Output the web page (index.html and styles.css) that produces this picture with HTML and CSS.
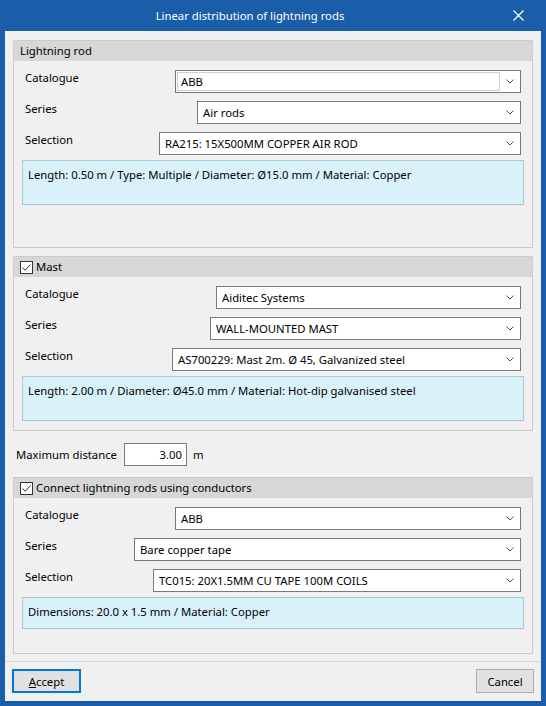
FILE: index.html
```html
<!DOCTYPE html>
<html lang="en">
<head>
<meta charset="utf-8">
<title>Linear distribution of lightning rods</title>
<link rel="stylesheet" href="styles.css">
</head>
<body>
<div class="window">
  <div class="titlebar">
    <div class="title">Linear distribution of lightning rods</div>
    <div class="close">
      <svg width="11" height="11" viewBox="0 0 11 11"><path d="M0.5 0.5 L10.5 10.5 M10.5 0.5 L0.5 10.5" stroke="#fff" stroke-width="1.2" fill="none"/></svg>
    </div>
  </div>
  <div class="client">
    <section class="group g1">
      <div class="group-head">Lightning rod</div>
      <div class="group-body">
        <div class="row">
          <span class="label">Catalogue</span>
          <div class="combo editable w346"><span class="edit">ABB</span><span class="arrow"><svg width="8" height="5" viewBox="0 0 8 5"><path d="M0.5 0.5 L4 4 L7.5 0.5" stroke="#555" stroke-width="1" fill="none"/></svg></span></div>
        </div>
        <div class="row">
          <span class="label">Series</span>
          <div class="combo w324"><span class="value">Air rods</span><span class="arrow"><svg width="8" height="5" viewBox="0 0 8 5"><path d="M0.5 0.5 L4 4 L7.5 0.5" stroke="#555" stroke-width="1" fill="none"/></svg></span></div>
        </div>
        <div class="row">
          <span class="label">Selection</span>
          <div class="combo w362"><span class="value">RA215: 15X500MM COPPER AIR ROD</span><span class="arrow"><svg width="8" height="5" viewBox="0 0 8 5"><path d="M0.5 0.5 L4 4 L7.5 0.5" stroke="#555" stroke-width="1" fill="none"/></svg></span></div>
        </div>
        <div class="info tall">Length: 0.50 m / Type: Multiple / Diameter: Ø15.0 mm / Material: Copper</div>
      </div>
    </section>

    <section class="group g2">
      <div class="group-head"><span class="check"><svg width="11" height="11" viewBox="0 0 11 11"><path d="M1.5 5.5 L4.2 8.2 L9.5 2.5" stroke="#333" stroke-width="1" fill="none"/></svg></span>Mast</div>
      <div class="group-body">
        <div class="row">
          <span class="label">Catalogue</span>
          <div class="combo w305"><span class="value">Aiditec Systems</span><span class="arrow"><svg width="8" height="5" viewBox="0 0 8 5"><path d="M0.5 0.5 L4 4 L7.5 0.5" stroke="#555" stroke-width="1" fill="none"/></svg></span></div>
        </div>
        <div class="row">
          <span class="label">Series</span>
          <div class="combo w311"><span class="value">WALL-MOUNTED MAST</span><span class="arrow"><svg width="8" height="5" viewBox="0 0 8 5"><path d="M0.5 0.5 L4 4 L7.5 0.5" stroke="#555" stroke-width="1" fill="none"/></svg></span></div>
        </div>
        <div class="row">
          <span class="label">Selection</span>
          <div class="combo w349"><span class="value">AS700229: Mast 2m. Ø 45, Galvanized steel</span><span class="arrow"><svg width="8" height="5" viewBox="0 0 8 5"><path d="M0.5 0.5 L4 4 L7.5 0.5" stroke="#555" stroke-width="1" fill="none"/></svg></span></div>
        </div>
        <div class="info tall">Length: 2.00 m / Diameter: Ø45.0 mm / Material: Hot-dip galvanised steel</div>
      </div>
    </section>

    <div class="distance">
      <span class="dist-label">Maximum distance</span>
      <span class="number">3.00</span>
      <span class="unit">m</span>
    </div>

    <section class="group g3">
      <div class="group-head"><span class="check"><svg width="11" height="11" viewBox="0 0 11 11"><path d="M1.5 5.5 L4.2 8.2 L9.5 2.5" stroke="#333" stroke-width="1" fill="none"/></svg></span>Connect lightning rods using conductors</div>
      <div class="group-body">
        <div class="row">
          <span class="label">Catalogue</span>
          <div class="combo w346"><span class="value">ABB</span><span class="arrow"><svg width="8" height="5" viewBox="0 0 8 5"><path d="M0.5 0.5 L4 4 L7.5 0.5" stroke="#555" stroke-width="1" fill="none"/></svg></span></div>
        </div>
        <div class="row">
          <span class="label">Series</span>
          <div class="combo w387"><span class="value">Bare copper tape</span><span class="arrow"><svg width="8" height="5" viewBox="0 0 8 5"><path d="M0.5 0.5 L4 4 L7.5 0.5" stroke="#555" stroke-width="1" fill="none"/></svg></span></div>
        </div>
        <div class="row">
          <span class="label">Selection</span>
          <div class="combo w368"><span class="value">TC015: 20X1.5MM CU TAPE 100M COILS</span><span class="arrow"><svg width="8" height="5" viewBox="0 0 8 5"><path d="M0.5 0.5 L4 4 L7.5 0.5" stroke="#555" stroke-width="1" fill="none"/></svg></span></div>
        </div>
        <div class="info short">Dimensions: 20.0 x 1.5 mm / Material: Copper</div>
      </div>
    </section>

    <div class="separator"></div>

    <div class="footer">
      <button class="btn default"><u>A</u>ccept</button>
      <button class="btn">Cancel</button>
    </div>
  </div>
</div>
</body>
</html>
```
FILE: styles.css
```css
* { box-sizing: border-box; }

html, body {
  margin: 0;
  padding: 0;
}

body {
  font-family: "Segoe UI", "Noto Sans", sans-serif;
  font-size: 11.3px;
  line-height: 16px;
  color: #000;
}

.window {
  width: 546px;
  height: 706px;
  background: #1a5ea9;
  padding: 0 5px 5px 5px;
  display: flex;
  flex-direction: column;
}

.titlebar {
  height: 31px;
  display: flex;
  align-items: center;
  color: #fff;
}

.title {
  flex: 1;
  text-align: center;
}

.close {
  width: 46px;
  height: 31px;
  display: flex;
  align-items: center;
  justify-content: center;
  padding-bottom: 1px;
}

.close svg { display: block; }

.client {
  flex: 1;
  background: #f0f0f0;
  display: flex;
  flex-direction: column;
  padding: 9px 0 0 0;
}

.group {
  margin: 0 8px;
  border: 1px solid #cbcbcb;
  display: flex;
  flex-direction: column;
}

.g1 { height: 208px; }
.g2 { height: 175px; margin-top: 8px; }
.g3 { height: 177px; margin-top: 11px; }

.group-head {
  height: 20px;
  background: #d7d7d7;
  display: flex;
  align-items: center;
  padding-left: 6px;
}

.check {
  width: 13px;
  height: 13px;
  border: 1px solid #333;
  background: #fff;
  margin-right: 3px;
  display: flex;
  align-items: center;
  justify-content: center;
}

.check svg { display: block; }

.group-body {
  padding: 9px 11px 0 11px;
  display: flex;
  flex-direction: column;
  gap: 8px;
}

.row {
  display: flex;
  justify-content: space-between;
  align-items: flex-start;
  height: 23px;
}

.label {
  padding-top: 0;
}

.combo {
  height: 23px;
  border: 1px solid #7a7a7a;
  background: #fff;
  display: flex;
  align-items: center;
  padding-left: 5px;
}

.combo .value {
  flex: 1;
  white-space: nowrap;
  overflow: hidden;
}

.combo.editable {
  padding: 1px 0 1px 1px;
  align-items: stretch;
}

.combo .edit {
  flex: 1;
  border: 1px solid #cfcfcf;
  padding-left: 3px;
  display: flex;
  align-items: center;
}

.arrow {
  width: 20px;
  display: flex;
  align-items: center;
  justify-content: center;
  padding-right: 1px;
}

.arrow svg { display: block; }

.w305 { width: 305px; }
.w311 { width: 311px; }
.w324 { width: 324px; }
.w346 { width: 346px; }
.w349 { width: 349px; }
.w362 { width: 362px; }
.w368 { width: 368px; }
.w387 { width: 387px; }

.info {
  margin: -3px -3px 0 -3px;
  background: #d9f2f9;
  border: 1px solid #a8c9d1;
  padding: 6px 5px;
}

.info.tall { height: 45px; }
.info.short { height: 32px; }

.distance {
  margin: 12px 0 0 11px;
  height: 23px;
  display: flex;
  align-items: center;
}

.dist-label { width: 108px; }

.number {
  width: 63px;
  height: 23px;
  border: 1px solid #7a7a7a;
  background: #fff;
  text-align: right;
  padding: 3px 4px 0 0;
}

.unit { margin-left: 6px; }

.separator {
  margin-top: 7px;
  height: 1px;
  background: #d9d9d9;
}

.footer {
  margin-top: 7px;
  padding: 0 7px;
  display: flex;
  justify-content: space-between;
}

.btn {
  font-family: inherit;
  font-size: 11.3px;
  color: #000;
  height: 24px;
  background: #e1e1e1;
  border: 1px solid #adadad;
  padding: 0;
  width: 58px;
}

.btn.default {
  width: 69px;
  border: 2px solid #0078d7;
}
```
